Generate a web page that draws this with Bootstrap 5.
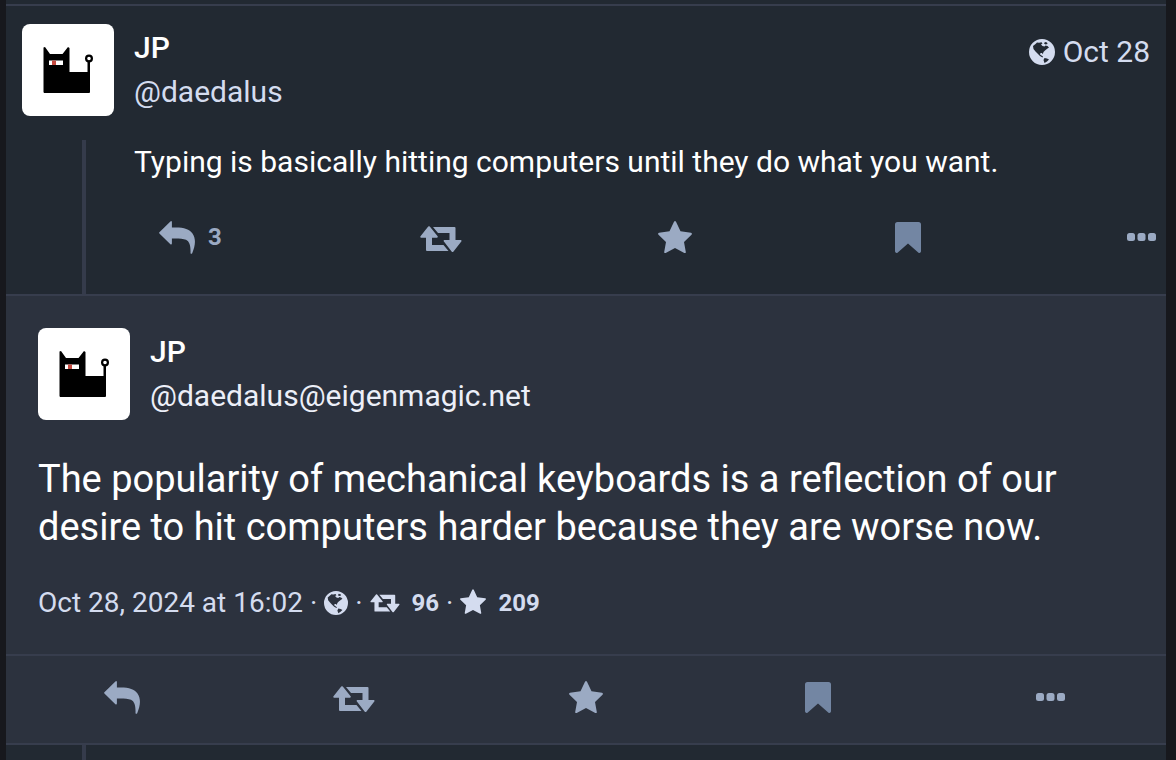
<!DOCTYPE html>
<html lang="en">
<head>
<meta charset="utf-8">
<meta name="viewport" content="width=device-width, initial-scale=1">
<title>JP: The popularity of mechanical keyboards</title>
<link rel="stylesheet" href="https://cdn.jsdelivr.net/npm/bootstrap@5.3.0/dist/css/bootstrap.min.css">
<style>
  body { background: #17181d; color: #fff; font-family: Roboto, "Liberation Sans", sans-serif; font-size: 30px; line-height: 44px; }
  a { color: inherit; text-decoration: none; }
  svg { display: block; flex: none; }
  .feed { margin: 0 10px 0 6px; padding-top: 4px; background: #222932; }
  .feed > * { border-top: 2px solid #373d4d; }
  .reply-post { padding-top: 18px; }
  .post-head { gap: 20px; padding: 0 16px; }
  .avatar { width: 92px; height: 92px; border-radius: 8px; background: #fff; }
  .author strong { font-weight: 500; }
  .muted { color: #d4dcef; }
  .handle-bright { color: #eceff8; }
  .posted { gap: 8px; margin-top: 6px; }
  .post-thread { padding-top: 24px; }
  .thread-line { width: 4px; margin-left: 76px; background: #353b4b; }
  .post-text { padding: 0 16px 0 48px; }
  .post-actions { padding: 29px 0 33px 67px; }
  .act { height: 48px; min-width: 48px; padding: 0 6px; gap: 13px; border: 0; background: none; color: #9baac3; font-size: 24px; font-weight: 700; }
  .act-counted { padding-right: 10px; }
  .act-saved { color: #7386a3; }
  .shift-up { margin-bottom: 4px; }
  .shift-down { margin-top: 5px; }
  .focus-post { background: #2c323e; }
  .focus-body { padding: 32px 32px 29px; }
  .focus-body .post-head { padding: 0; }
  .focus-text { margin: 35px 0 30px; font-size: 38px; line-height: 48px; }
  .meta-row { gap: 7px; font-size: 28px; }
  .meta-row b { font-size: 24px; font-weight: 700; }
  .stat { gap: 12px; }
  .focus-actions { border-top: 2px solid #373d4d; padding: 17px 0 22px; }
  .next-post .thread-line { height: 15px; }
</style>
</head>
<body>
<svg width="0" height="0" class="position-absolute" aria-hidden="true">
  <symbol id="cat" viewBox="0 0 92 92">
    <path d="M21.500 23.500L23 23L28 30H40.500L46 23L47.500 24V48H65.500V37H68V68.500L67 69H22L21.500 68Z"/>
    <circle cx="67" cy="34.500" r="2.900" fill="#fff" stroke="#000" stroke-width="2.200"/>
    <path d="M27 36.500H41V41H27Z" fill="#fff"/><path d="M30 36.500H34V41H30Z" fill="#c54a40"/>
  </symbol>
  <symbol id="reply" viewBox="0 0 36 33">
    <path fill="currentColor" d="M.4 11.200L11.400.4Q12.700-.4 12.900 1V6.500C24 6 30 7.500 33.500 12.500C37.500 18.500 36 25.500 33.200 32.200Q32.300 33.300 31.500 32.200C31.800 25 30.500 20.500 27 18.800C24 17.500 19 17.400 12.900 17.500V22.500Q12.700 24 11.400 23.200L.4 12.500Q-.2 11.800.4 11.200Z"/>
  </symbol>
  <symbol id="boost" viewBox="0 0 42 27">
    <path fill="currentColor" d="M8.200.6Q9 0 9.800.6L17.800 10.500Q18 11.500 17 11.700H12V19H23.500L28.500 25H7Q6 25 6 24V11.700H1Q0 11.500.3 10.500ZM13 1H34.500Q35.500 1 35.500 2V14H40.700Q42 14.200 41.500 15.300L33.500 25.500Q32.500 26.500 31.600 25.500L23.700 15.300Q23.200 14.200 24.300 14H29.500V7H18Z"/>
  </symbol>
  <symbol id="star" viewBox="0 0 34 32">
    <path fill="currentColor" d="M16 .7Q17 -.6 18 .7L22.500 10.300L33 11.800Q34.600 12.400 33.500 13.700L26 21L27.800 31Q27.800 32.500 26.300 32L17 27L7.700 32Q6.200 32.500 6.200 31L8 21L.5 13.700Q-.6 12.400 1 11.800L11.500 10.300Z"/>
  </symbol>
  <symbol id="saved" viewBox="0 0 26 31">
    <path fill="currentColor" d="M2.500 0H23.500Q26 0 26 2.500V29.500Q25.500 31.500 23.500 30.700L13 21.500L2.500 30.700Q.5 31.500 0 29.500V2.500Q0 0 2.500 0Z"/>
  </symbol>
  <symbol id="more" viewBox="0 0 29 8">
    <g fill="currentColor"><rect width="8" height="8" rx="2.500"/><rect x="10.500" width="8" height="8" rx="2.500"/><rect x="21" width="8" height="8" rx="2.500"/></g>
  </symbol>
  <symbol id="globe" viewBox="0 0 26 26">
    <path fill="currentColor" fill-rule="evenodd" d="M13 0A13 13 0 1 1 13 26A13 13 0 1 1 13 0ZM4 7L4.500 10L6.500 12.500L8.500 14.500L11 17L13.500 18.500L14 17.500L12.500 16.500L11 15.500L11.500 14L13 14L13.800 15.200L14.500 13L16 11.500L18.500 9.500L20 8.500L18.500 7L16.500 6.500L15.500 7.500L13.500 7L12 5.500L13.500 4.500L12.500 3.200L10 3.800L8 3.500L6.500 5ZM16 3L15 4.500L16.500 5.500L18.500 5L18 3.500ZM15.500 19L14.500 21L15.500 24L18 22.500L20 20.500L18 19.500Z"/>
  </symbol>
</svg>

<main class="feed min-vh-100">
  <article class="reply-post">
    <header class="post-head d-flex align-items-start">
      <svg class="avatar" role="img" aria-label="JP"><use href="#cat"/></svg>
      <a href="#" class="author d-flex flex-column flex-grow-1 my-auto"><strong>JP</strong><span class="muted">@daedalus</span></a>
      <a href="#" class="posted muted d-flex align-items-center"><svg width="26" height="26"><use href="#globe"/></svg><time datetime="2024-10-28">Oct 28</time></a>
    </header>
    <div class="post-thread d-flex">
      <div class="thread-line"></div>
      <div class="flex-grow-1">
        <p class="post-text mb-0">Typing is basically hitting computers until they do what you want.</p>
        <div class="post-actions d-flex justify-content-between">
          <button type="button" class="act act-counted d-flex align-items-center" aria-label="Reply, 3 replies"><svg width="36" height="33"><use href="#reply"/></svg><span>3</span></button>
          <button type="button" class="act d-flex align-items-center justify-content-center p-0" aria-label="Boost"><svg class="shift-down" width="42" height="27"><use href="#boost"/></svg></button>
          <button type="button" class="act d-flex align-items-center justify-content-center" aria-label="Favourite"><svg width="34" height="32"><use href="#star"/></svg></button>
          <button type="button" class="act act-saved d-flex align-items-center justify-content-center" aria-label="Bookmark"><svg width="26" height="31"><use href="#saved"/></svg></button>
          <button type="button" class="act d-flex align-items-center justify-content-center" aria-label="More"><svg width="29" height="8"><use href="#more"/></svg></button>
        </div>
      </div>
    </div>
  </article>

  <article class="focus-post">
    <div class="focus-body">
      <header class="post-head d-flex align-items-center">
        <svg class="avatar" role="img" aria-label="JP"><use href="#cat"/></svg>
        <a href="#" class="author d-flex flex-column"><strong>JP</strong><span class="handle-bright">@daedalus@eigenmagic.net</span></a>
      </header>
      <p class="focus-text">The popularity of mechanical keyboards is a reflection of our desire to hit computers harder because they are worse now.</p>
      <div class="meta-row muted d-flex align-items-center">
        <a href="#">Oct 28, 2024 at 16:02</a><span>·</span>
        <svg width="24" height="24"><use href="#globe"/></svg><span>·</span>
        <a href="#" class="stat d-flex align-items-center"><svg width="30" height="19"><use href="#boost"/></svg><b>96</b></a><span>·</span>
        <a href="#" class="stat d-flex align-items-center"><svg class="shift-up" width="26" height="25"><use href="#star"/></svg><b>209</b></a>
      </div>
    </div>
    <div class="focus-actions row row-cols-5 g-0">
      <div class="col d-flex justify-content-center"><button type="button" class="act d-flex align-items-center" aria-label="Reply"><svg width="36" height="33"><use href="#reply"/></svg></button></div>
      <div class="col d-flex justify-content-center"><button type="button" class="act d-flex align-items-center" aria-label="Boost"><svg class="shift-down" width="42" height="27"><use href="#boost"/></svg></button></div>
      <div class="col d-flex justify-content-center"><button type="button" class="act d-flex align-items-center justify-content-center" aria-label="Favourite"><svg width="34" height="32"><use href="#star"/></svg></button></div>
      <div class="col d-flex justify-content-center"><button type="button" class="act act-saved d-flex align-items-center justify-content-center" aria-label="Bookmark"><svg width="26" height="31"><use href="#saved"/></svg></button></div>
      <div class="col d-flex justify-content-center"><button type="button" class="act d-flex align-items-center justify-content-center" aria-label="More"><svg width="29" height="8"><use href="#more"/></svg></button></div>
    </div>
  </article>

  <div class="next-post"><div class="thread-line"></div></div>
</main>
<script src="https://cdn.jsdelivr.net/npm/bootstrap@5.3.0/dist/js/bootstrap.bundle.min.js"></script>
</body>
</html>
